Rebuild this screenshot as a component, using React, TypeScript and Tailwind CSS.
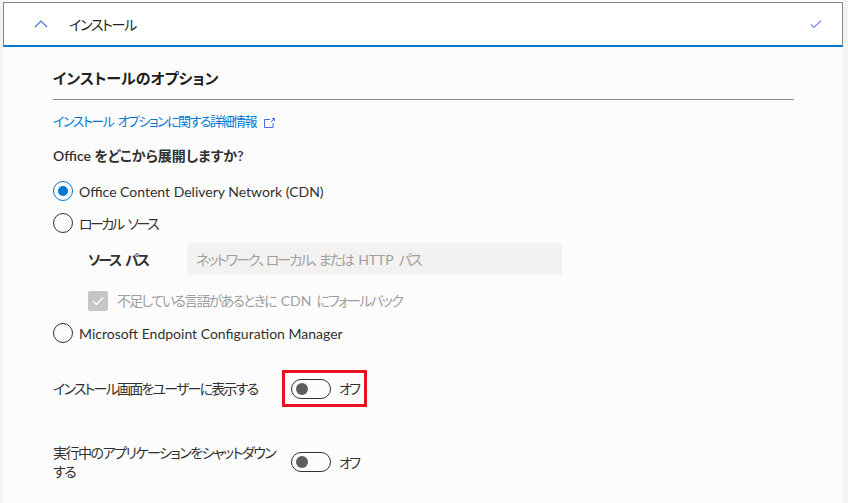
import React from "react";

const font = { fontFamily: '"Lato", "Noto Sans CJK JP", sans-serif' };

function Sp({ w = 4 }: { w?: number }) {
  return <span className="inline-block" style={{ width: w }} />;
}

function Radio({ checked, children }: { checked?: boolean; children: React.ReactNode }) {
  return (
    <div className="flex items-center h-[20px] gap-[6px]">
      {checked ? (
        <span className="w-[20px] h-[20px] rounded-full border border-[#0078d4] flex items-center justify-center">
          <span className="w-[10px] h-[10px] rounded-full bg-[#0078d4]" />
        </span>
      ) : (
        <span className="w-[20px] h-[20px] rounded-full border border-[#323130]" />
      )}
      <span className="text-[14px] text-[#323130] whitespace-nowrap">{children}</span>
    </div>
  );
}

function Toggle() {
  return (
    <div className="flex items-center gap-[8px]">
      <span className="w-[40px] h-[20px] rounded-full border border-[#323130] flex items-center pl-[4px]">
        <span className="w-[12px] h-[12px] rounded-full bg-[#605e5c]" />
      </span>
      <span className="text-[14px] text-[#323130] tracking-[-2.5px]">オフ</span>
    </div>
  );
}

export default function App() {
  return (
    <div
      className="w-[848px] h-[503px] bg-[#f3f3f3] overflow-hidden [font-feature-settings:'palt']"
      style={font}
    >
      <div className="ml-[3px] w-[840px] h-[503px] bg-[#fcfcfc] flex flex-col">
        <div className="mt-[2px] h-[45px] bg-white border-t border-l border-r border-[#8a8886] border-b-2 border-b-[#0078d4] flex items-center">
          <svg width="14" height="10" viewBox="0 0 14 10" className="ml-[30px]">
            <path d="M1 8 L7 2 L13 8" fill="none" stroke="#4f6bed" strokeWidth="1.2" />
          </svg>
          <span className="ml-[21px] text-[14px] text-[#201f1e] tracking-[-1.3px]">インストール</span>
          <svg width="12" height="10" viewBox="0 0 12 10" className="ml-auto mr-[20px]">
            <path d="M1 5.5 L4 8.5 L11 1.5" fill="none" stroke="#6b86f0" strokeWidth="1.1" />
          </svg>
        </div>
        <div className="pl-[50px] pr-[49px] pt-[21px] flex flex-col">
          <div className="text-[15px] font-bold text-[#201f1e] pb-[10px] border-b border-[#8a8886] leading-[21px]">
            インストールのオプション
          </div>
          <div className="mt-[11px] flex items-center gap-[7px] text-[13px] text-[#0078d4] leading-[20px]">
            <span className="tracking-[-1.5px] whitespace-nowrap">
              インストール<Sp w={4} />オプションに関する詳細情報
            </span>
            <svg width="13" height="12" viewBox="0 0 13 12" className="mt-[3px]">
              <path d="M7 2.5 H1.5 V10.5 H10 V6" fill="none" stroke="#4f6bed" strokeWidth="1" />
              <path d="M8 5 L11.5 1.5 M9 1.5 H11.5 V4" fill="none" stroke="#4f6bed" strokeWidth="1" />
            </svg>
          </div>
          <div className="mt-[15px] text-[14px] font-semibold text-[#323130] leading-[20px]">
            Office をどこから展開しますか?
          </div>
          <div className="mt-[15px] flex flex-col gap-[12px]">
            <Radio checked>Office Content Delivery Network (CDN)</Radio>
            <Radio>
              <span className="tracking-[-2.5px]">
                ローカル<Sp w={5} />ソース
              </span>
            </Radio>
          </div>
          <div className="ml-[35px] mt-[10px] flex items-center">
            <span className="w-[99px] text-[14px] font-semibold text-[#323130] tracking-[-2.2px] whitespace-nowrap">
              ソース<Sp w={5} />パス
            </span>
            <div className="w-[375px] h-[32px] bg-[#f3f2f1] rounded-[2px] flex items-center px-[9px] text-[14px] text-[#a19f9d] whitespace-nowrap tracking-[-1.9px]">
              ネットワーク<span className="tracking-normal">、</span>ローカル<span className="tracking-normal">、</span>または
              <Sp w={5} />
              <span className="tracking-normal">HTTP</span>
              <Sp w={5} />
              パス
            </div>
          </div>
          <div className="ml-[35px] mt-[15px] flex items-center gap-[9px]">
            <span className="w-[20px] h-[20px] rounded-[2px] bg-[#c8c6c4] flex items-center justify-center">
              <svg width="12" height="10" viewBox="0 0 12 10">
                <path d="M1 5 L4.5 8.5 L11 1.5" fill="none" stroke="#ffffff" strokeWidth="1.3" />
              </svg>
            </span>
            <span className="text-[14px] text-[#a19f9d] whitespace-nowrap tracking-[-1.8px]">
              不足している言語があるときに<Sp w={5} />
              <span className="tracking-normal">CDN</span>
              <Sp w={5} />
              にフォールバック
            </span>
          </div>
          <div className="mt-[12px]">
            <Radio>Microsoft Endpoint Configuration Manager</Radio>
          </div>
          <div className="mt-[35px] flex items-center">
            <span className="w-[238px] text-[14px] text-[#323130] leading-[20px] whitespace-nowrap tracking-[-1.8px]">
              インストール画面をユーザーに表示する
            </span>
            <div className="relative">
              <div className="absolute left-[-9px] top-[-8px] w-[85px] h-[37px] border-[3px] border-[#e81123]" />
              <Toggle />
            </div>
          </div>
          <div className="mt-[44px] flex items-center">
            <span className="w-[238px] text-[14px] text-[#323130] leading-[19px] whitespace-nowrap tracking-[-1.5px]">
              実行中のアプリケーションをシャットダウン
              <br />
              する
            </span>
            <Toggle />
          </div>
        </div>
      </div>
    </div>
  );
}
